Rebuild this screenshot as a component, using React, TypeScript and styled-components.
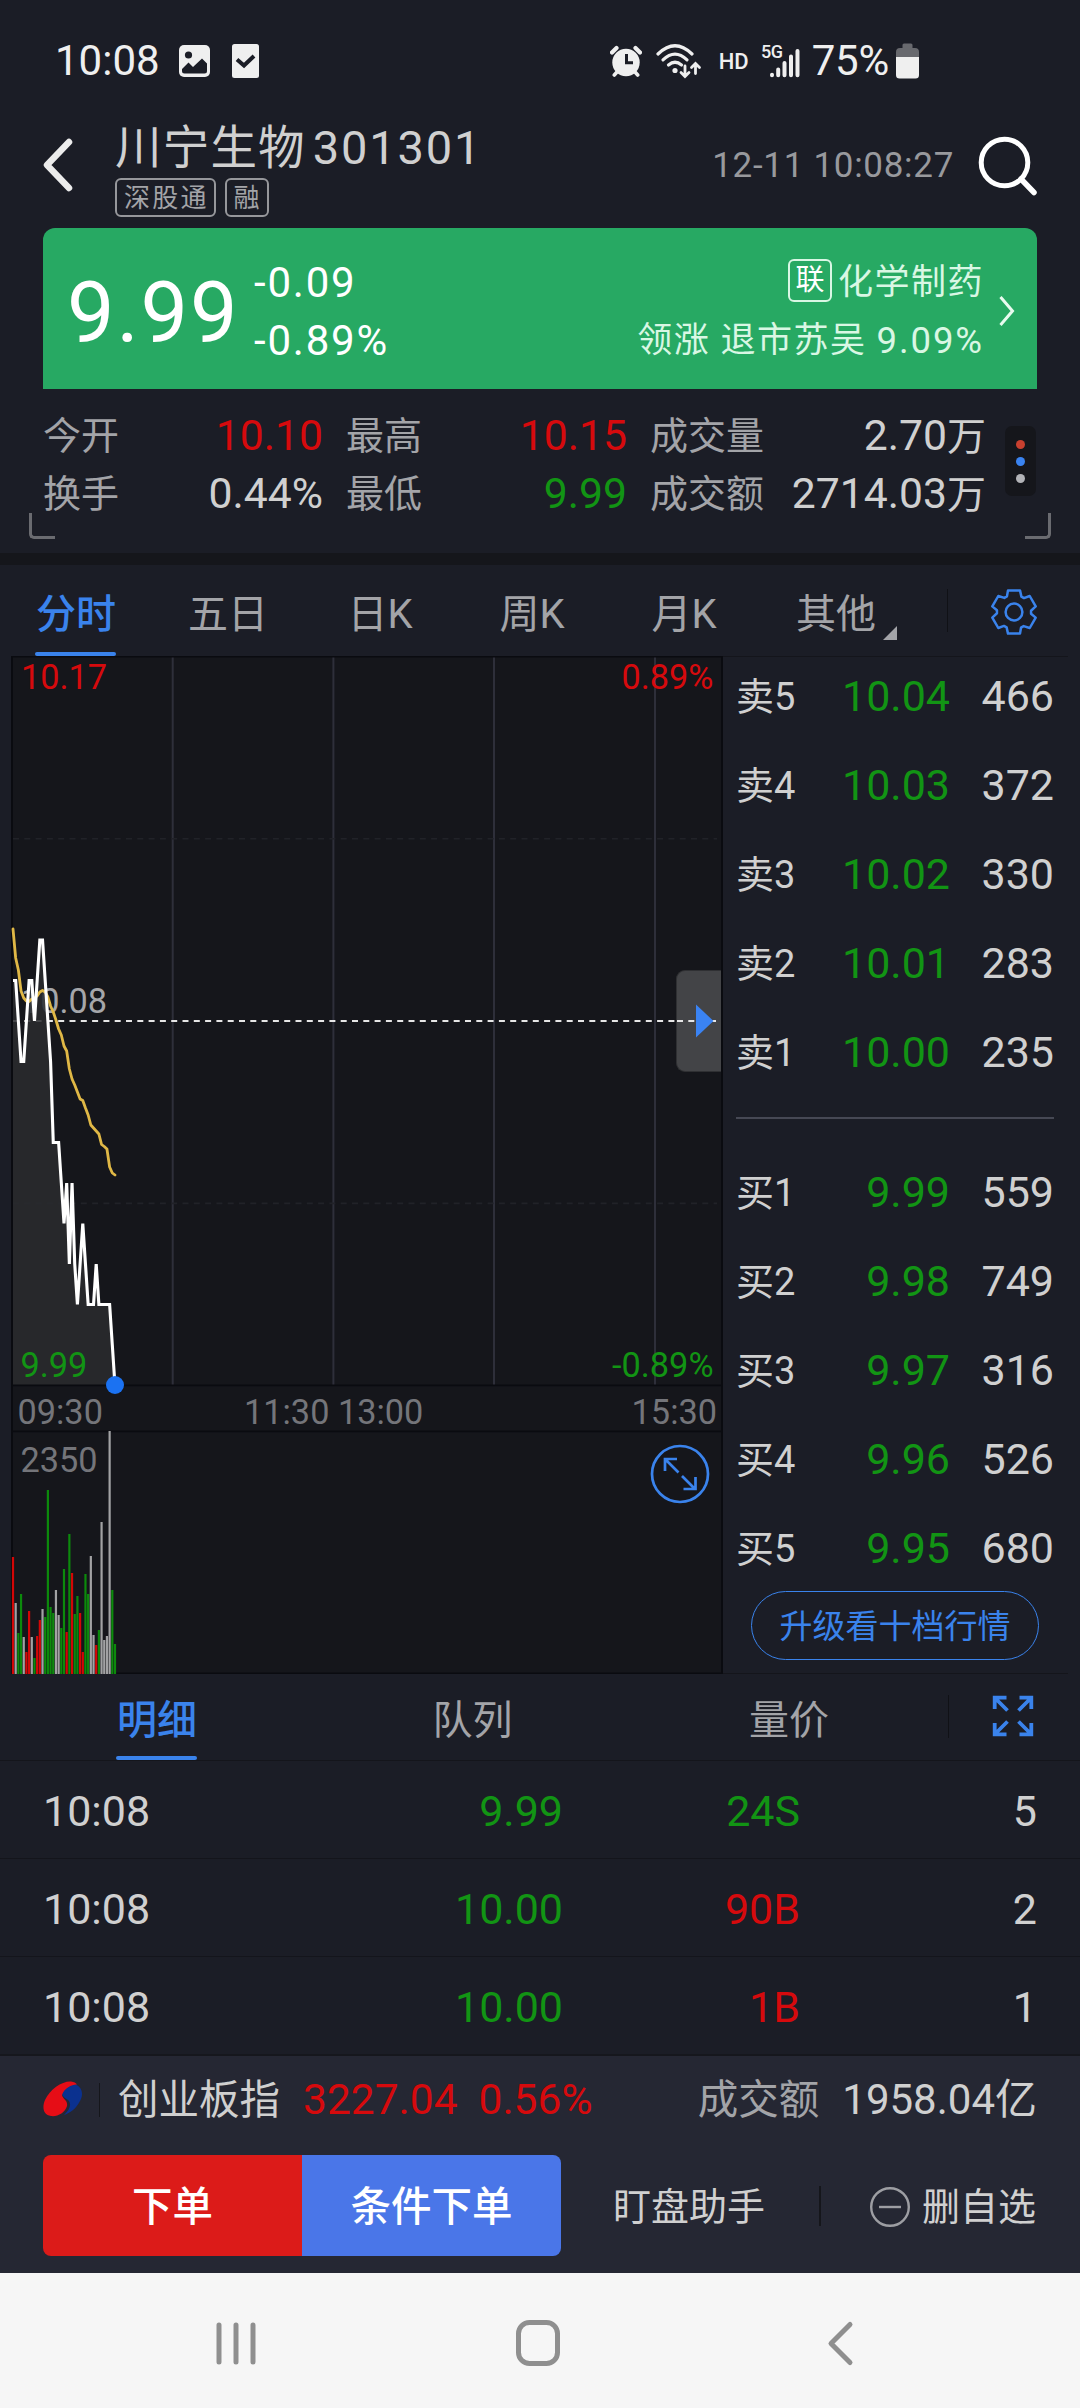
import React from "react";
import styled, { createGlobalStyle } from "styled-components";

const c = {
  bg: "#1b1d26",
  panel: "#15161b",
  line: "#0a0b10",
  hair: "#14151b",
  text: "#d0d0d0",
  muted: "#a3a4a8",
  dim: "#74757a",
  red: "#d60a0d",
  green: "#129414",
  blue: "#3a83ec",
  card: "#27a963",
};

const Global = createGlobalStyle`
  html, body { margin: 0; padding: 0; background: ${c.bg}; }
  * { box-sizing: border-box; }
`;

const Screen = styled.div`
  width: 1080px;
  height: 2408px;
  overflow: hidden;
  display: flex;
  flex-direction: column;
  background: ${c.bg};
  color: ${c.text};
  font-family: Roboto, "Noto Sans CJK SC", sans-serif;
  font-size: 42px;
  white-space: pre;
`;

/* ---------- status bar ---------- */

const StatusBar = styled.div`
  height: 122px;
  flex: none;
  display: flex;
  align-items: center;
  padding-left: 55px;
  padding-right: 161px;
  color: #efefef;
  line-height: 50px;
  svg { display: block; flex: none; }
`;
const StatusTime = styled.span`
  width: 124px;
`;
const StatusRight = styled.div`
  margin-left: auto;
  display: flex;
  align-items: center;
`;
const HdMark = styled.span`
  font-size: 22px;
  font-weight: 500;
  line-height: 30px;
  margin: 2px 12px 0 17px;
`;
const Percent = styled.span`
  margin: 0 7px 0 11px;
  letter-spacing: -0.2px;
`;

/* ---------- header ---------- */

const Header = styled.header`
  height: 106px;
  flex: none;
  display: flex;
  align-items: flex-start;
  padding: 0 42px 0 43px;
`;
const BackSlot = styled.div`
  width: 72px;
  height: 86px;
  display: flex;
  align-items: center;
`;
const TitleLine = styled.div`
  display: flex;
  height: 56px;
  line-height: 52px;
`;
const StockName = styled.span`
  font-size: 46.5px;
  letter-spacing: 1.2px;
`;
const StockCode = styled.span`
  font-size: 47px;
  letter-spacing: 1.8px;
  margin-left: 7px;
`;
const Tags = styled.div`
  display: flex;
  gap: 9px;
`;
const Tag = styled.span`
  height: 39px;
  border: 2px solid #96979b;
  border-radius: 6px;
  padding: 0 5px 0 7px;
  font-size: 26px;
  line-height: 37px;
  letter-spacing: 2.2px;
  color: ${c.muted};
`;
const HeaderRight = styled.div`
  margin-left: auto;
  height: 87px;
  display: flex;
  align-items: center;
  gap: 24px;
`;
const Clock = styled.span`
  font-size: 35px;
  letter-spacing: 0.7px;
  color: #98999d;
`;

/* ---------- quote card ---------- */

const QuoteCard = styled.section`
  height: 161px;
  flex: none;
  margin: 0 43px;
  border-radius: 12px 12px 0 0;
  background: ${c.card};
  display: flex;
  align-items: flex-start;
  color: #fff;
`;
const LastPrice = styled.div`
  font-size: 84.5px;
  line-height: 100px;
  letter-spacing: 1.9px;
  padding: 36px 0 0 24px;
  width: 211px;
`;
const Stack = styled.div<{ $right?: boolean }>`
  display: flex;
  flex-direction: column;
  padding-top: 25.5px;
  line-height: 58px;
  letter-spacing: 1.8px;
  align-items: ${(p) => (p.$right ? "flex-end" : "flex-start")};
  margin-left: ${(p) => (p.$right ? "auto" : "0")};
`;
const SectorLine = styled.div`
  display: flex;
  align-items: center;
  font-size: 35px;
  letter-spacing: 1.5px;
  color: #d9f7e4;
`;
const SectorGain = styled.span`
  font-size: 36.5px;
  letter-spacing: 1.9px;
`;
const LinkBadge = styled.span`
  width: 44px;
  height: 43px;
  border: 2px solid #d9f7e4;
  border-radius: 6px;
  margin-right: 6px;
  margin-top: -5px;
  text-align: center;
  font-size: 29px;
  line-height: 39px;
  letter-spacing: 0;
  color: #fff;
`;
const CardArrow = styled.svg`
  margin: 67px 22px 0 15px;
  flex: none;
`;

/* ---------- key figures ---------- */

const Figures = styled.section`
  height: 164px;
  flex: none;
  position: relative;
  display: flex;
  align-items: flex-start;
  padding: 17px 43px 0;
`;
const FigureCol = styled.div<{ $w: number; $gap?: number }>`
  width: ${(p) => p.$w}px;
  margin-right: ${(p) => p.$gap ?? 0}px;
`;
const FigureRow = styled.div`
  display: flex;
  justify-content: space-between;
  height: 58px;
  line-height: 58px;
`;
const Label = styled.span`
  font-size: 38px;
  line-height: 60px;
  color: ${c.muted};
`;
const Value = styled.span<{ $c?: string }>`
  font-size: 42.7px;
  color: ${(p) => p.$c ?? c.text};
`;
const Unit = styled.span`
  font-size: 39px;
`;
const DotsPill = styled.div`
  width: 31px;
  height: 70px;
  margin: 20px 0 0 19px;
  border-radius: 7px;
  background: ${c.panel};
  display: flex;
  flex-direction: column;
  align-items: center;
  justify-content: center;
  gap: 8px;
`;
const Dot = styled.i<{ $c: string }>`
  width: 9px;
  height: 9px;
  border-radius: 50%;
  background: ${(p) => p.$c};
`;
const Corner = styled.i<{ $side: "left" | "right" }>`
  position: absolute;
  bottom: 14px;
  ${(p) => p.$side}: 29px;
  width: 26px;
  height: 26px;
  border-bottom: 3px solid #6a6b70;
  border-${(p) => p.$side}: 3px solid #6a6b70;
  border-bottom-${(p) => p.$side}-radius: 5px;
`;
const Band = styled.div`
  height: 12px;
  flex: none;
  background: ${c.panel};
`;

/* ---------- tabs ---------- */

const TabBar = styled.nav<{ $h: number }>`
  height: ${(p) => p.$h}px;
  flex: none;
  display: flex;
  align-items: stretch;
`;
const TabCell = styled.div<{ $w: number; $on?: boolean }>`
  width: ${(p) => p.$w}px;
  display: flex;
  align-items: center;
  justify-content: center;
  font-size: 40px;
  position: relative;
  color: ${(p) => (p.$on ? c.blue : c.muted)};
  font-weight: ${(p) => (p.$on ? 500 : 400)};
`;
const Underline = styled.i`
  position: absolute;
  bottom: 0;
  left: 50%;
  width: 81px;
  margin-left: -41px;
  height: 4px;
  border-radius: 2px;
  background: ${c.blue};
`;
const MoreMark = styled.i`
  position: absolute;
  left: 123px;
  bottom: 16px;
  border-left: 14px solid transparent;
  border-bottom: 14px solid ${c.muted};
`;
const TabTool = styled.div<{ $top: number; $left: number }>`
  flex: 1;
  padding: ${(p) => p.$top}px 0 0 ${(p) => p.$left}px;
  display: flex;
  gap: 43px;
  align-items: flex-start;
  svg { display: block; }
`;
const TabRule = styled.i`
  width: 1px;
  height: 43px;
  background: #101116;
`;

/* ---------- chart + order book ---------- */

const Main = styled.section`
  height: 1018px;
  flex: none;
  display: flex;
`;
const ChartBox = styled.div`
  width: 723px;
  position: relative;
  svg { display: block; }
  svg text { font-family: Roboto, sans-serif; font-size: 34.3px; }
`;
const Handle = styled.div`
  position: absolute;
  left: 676px;
  top: 314px;
  width: 45px;
  height: 102px;
  border-radius: 9px 0 0 9px;
  background: #434447;
  border: 1px solid #2f3033;
  border-right: 0;
  display: flex;
  align-items: center;
  svg { display: block; margin-left: -1px; }
`;
const Book = styled.div`
  width: 345px;
  padding: 0 14px 0 13px;
  border-top: 1px solid ${c.hair};
  border-bottom: 1px solid ${c.hair};
  display: flex;
  flex-direction: column;
`;
const BookRow = styled.div`
  height: 89px;
  flex: none;
  display: grid;
  grid-template-columns: 78px 136px 1fr;
  line-height: 78px;
  font-size: 43px;
`;
const BookLabel = styled.span`
  font-size: 38px;
  line-height: 81px;
`;
const BookNum = styled.span<{ $c?: string }>`
  text-align: right;
  color: ${(p) => p.$c ?? c.text};
`;
const BookRule = styled.div`
  height: 2px;
  flex: none;
  margin: 15px 0 34px;
  background: #464854;
`;
const Upgrade = styled.div`
  width: 288px;
  height: 69px;
  flex: none;
  margin: -7px 0 0 15px;
  border: 1.5px solid ${c.blue};
  border-radius: 35px;
  color: ${c.blue};
  font-size: 33px;
  line-height: 69px;
  text-align: center;
`;

/* ---------- ticks ---------- */

const TickRow = styled.div`
  height: 98px;
  flex: none;
  border-top: 1px solid ${c.hair};
  padding: 0 43px;
  display: grid;
  grid-template-columns: 200px 320px 237px 1fr;
  font-size: 43px;
  line-height: 100px;
`;
const TickNum = styled.span<{ $c?: string }>`
  text-align: right;
  color: ${(p) => p.$c ?? c.text};
`;

/* ---------- footer ---------- */

const Footer = styled.footer`
  height: 219px;
  flex: none;
  background: #252733;
  border-top: 2px solid #16171d;
`;
const IndexRow = styled.div`
  height: 99px;
  display: flex;
  align-items: center;
  padding: 0 43px 12px;
  line-height: 60px;
  svg { display: block; }
`;
const FooterRule = styled.i<{ $h: number; $w: number; $m: string }>`
  width: ${(p) => p.$w}px;
  height: ${(p) => p.$h}px;
  margin: ${(p) => p.$m};
  background: #15161b;
`;
const IndexName = styled.span`
  font-size: 40.5px;
  width: 185px;
`;
const IndexNum = styled.span`
  font-size: 42.5px;
  color: ${c.red};
  margin-right: 21px;
`;
const Turnover = styled.span`
  margin-left: auto;
  font-size: 40.5px;
  color: ${c.muted};
  margin-right: 23px;
`;
const Actions = styled.div`
  height: 101px;
  display: flex;
  align-items: center;
  padding: 0 43px;
`;
const Action = styled.div<{ $bg: string; $r: string }>`
  width: 259px;
  height: 101px;
  background: ${(p) => p.$bg};
  border-radius: ${(p) => p.$r};
  color: #fff;
  font-size: 40.5px;
  font-weight: 500;
  line-height: 104px;
  text-align: center;
`;
const TextAction = styled.div<{ $ml?: number }>`
  height: 101px;
  margin-left: ${(p) => p.$ml ?? 0}px;
  display: flex;
  align-items: center;
  gap: 11px;
  font-size: 38px;
  line-height: 50px;
  padding-top: 2px;
`;

const NavBar = styled.div`
  flex: 1;
  background: #f6f6f6;
  display: flex;
  align-items: flex-start;
  padding: 46px 0 0 216px;
  svg { display: block; flex: none; }
`;

/* ---------- data ---------- */

const X0 = 13;
const STEP = 2.684;
const prices = [
  9, 9, 8, 7, 7, 8, 9, 9, 8, 9, 10, 10, 9, 8, 7, 5, 5, 5, 4, 3, 4, 2, 4, 2, 1, 2, 3, 2, 1, 1, 1, 2, 1, 1, 1, 1, 1, 0, -1,
];
const average = [
  273, 302, 314, 335, 342, 345, 345.5, 343, 342, 340, 336, 334.5, 336, 341, 350, 356, 364, 373, 379, 390, 395, 413, 423,
  429, 436, 443, 444.5, 452, 459, 469, 472, 475, 478, 488.5, 490.5, 493, 511, 517, 519,
];
const volumes: [string, number][] = [
  ["r", 117], ["w", 71], ["g", 41], ["g", 80], ["w", 37], ["r", 22], ["r", 63], ["w", 37], ["g", 16], ["r", 38],
  ["r", 54], ["w", 65], ["g", 57], ["g", 184], ["g", 67], ["g", 61], ["w", 84], ["w", 59], ["g", 46], ["g", 105],
  ["r", 42], ["g", 140], ["r", 101], ["g", 60], ["g", 78], ["r", 61], ["r", 22], ["g", 100], ["g", 80], ["w", 118],
  ["w", 39], ["r", 29], ["g", 44], ["w", 152], ["w", 34], ["w", 38], ["w", 243], ["g", 84], ["g", 30],
];
const volumeColor: Record<string, string> = { r: "#d40606", g: "#0c8a0c", w: "#a2a2a4" };
const priceLine = prices.map((p, i) => `${X0 + i * STEP},${365 - (p - 8) * 40.5}`).join(" ");
const averageLine = average.map((y, i) => `${X0 + i * STEP},${y}`).join(" ");

const asks = [
  ["卖5", "10.04", "466"],
  ["卖4", "10.03", "372"],
  ["卖3", "10.02", "330"],
  ["卖2", "10.01", "283"],
  ["卖1", "10.00", "235"],
];
const bids = [
  ["买1", "9.99", "559"],
  ["买2", "9.98", "749"],
  ["买3", "9.97", "316"],
  ["买4", "9.96", "526"],
  ["买5", "9.95", "680"],
];
const ticks = [
  ["10:08", "9.99", "24S", "5"],
  ["10:08", "10.00", "90B", "2"],
  ["10:08", "10.00", "1B", "1"],
];

/* ---------- drawings ---------- */

const gearPoints = Array.from({ length: 6 }, (_, k) => {
  const a = (k * Math.PI) / 3;
  return [[-6, -21.6], [6, -21.6], [7.4, -15.4], [10, -13.9]]
    .map(([x, y]) => `${(x * Math.cos(a) - y * Math.sin(a)).toFixed(2)},${(x * Math.sin(a) + y * Math.cos(a)).toFixed(2)}`)
    .join(" ");
}).join(" ");

const Gear = () => (
  <svg width="46" height="46" viewBox="-23 -23 46 46" fill="none" stroke={c.blue} strokeWidth="2.5" strokeLinejoin="round">
    <polygon points={gearPoints} />
    <circle r="8.4" />
  </svg>
);

const Glyph = styled.svg<{ $ml?: number }>`
  margin-left: ${(p) => p.$ml ?? 0}px;
`;

const StatusIcons = () => (
  <>
    <Glyph width="31" height="32" viewBox="0 0 31 32">
      <rect width="31" height="32" rx="5" fill="#efefef" />
      <circle cx="9.5" cy="10" r="3.6" fill={c.bg} />
      <path d="M3 24 L9.5 17.5 L14 22 L23 13.5 L28 18.5 V26 Q28 28.5 25.5 28.5 H5.5 Q3 28.5 3 26 Z" fill={c.bg} />
    </Glyph>
    <Glyph $ml={22} width="27" height="34" viewBox="0 0 27 34">
      <rect width="27" height="34" rx="2.5" fill="#efefef" />
      <path d="M5 15.5 L12 21.5 L22 12" fill="none" stroke={c.bg} strokeWidth="4" />
    </Glyph>
  </>
);

const Alarm = () => (
  <Glyph width="32" height="32" viewBox="0 0 32 32">
    <circle cx="16" cy="17.5" r="13.7" fill="#efefef" />
    <path d="M2 7.5 L6.5 3 M30 7.5 L25.5 3" stroke="#efefef" strokeWidth="4.2" strokeLinecap="round" />
    <path d="M7 27 L4.3 30 M25 27 L27.7 30" stroke="#efefef" strokeWidth="3.6" strokeLinecap="round" />
    <path d="M16.5 9 V17.8 H23" fill="none" stroke={c.bg} strokeWidth="3" />
  </Glyph>
);

const Wifi = () => (
  <Glyph $ml={14} width="46" height="35" viewBox="0 0 46 35" fill="none" stroke="#efefef" strokeLinecap="round">
    <path d="M2 10 Q19 -6.5 36 10" strokeWidth="3.2" />
    <path d="M7 15.8 Q19 4.5 31 15.8" strokeWidth="3.2" />
    <path d="M12.5 21 Q19 15.5 25.5 21" strokeWidth="3.2" />
    <circle cx="19" cy="26.5" r="2.6" fill="#efefef" stroke="none" />
    <path d="M29 22 V32 M25 28.5 L29 32.5 L33 28.5" strokeWidth="2.8" />
    <path d="M39.5 29.5 V20 M35.5 23.5 L39.5 19.5 L43.5 23.5" strokeWidth="2.8" />
  </Glyph>
);

const Signal = () => (
  <Glyph width="40" height="44" viewBox="0 -4 40 44">
    <text x="0" y="14.5" fontFamily="Roboto, sans-serif" fontWeight="500" fontSize="18" textLength="22" fill="#efefef">5G</text>
    <g stroke="#efefef" strokeWidth="4" strokeLinecap="round">
      <path d="M11 31.7 V32.3 M17.2 26.5 V32.3 M23.5 20 V32.3 M30 13.5 V32.3 M36.5 8 V32.3" />
    </g>
  </Glyph>
);

const Battery = () => (
  <Glyph width="23" height="36" viewBox="0 0 23 36">
    <path d="M6.5 2 Q6.5 0.5 8 0.5 H15 Q16.5 0.5 16.5 2 V5 H19 Q23 5 23 9 V15 H0 V9 Q0 5 4 5 H6.5 Z" fill="#68696e" />
    <path d="M0 14 H23 V32 Q23 35.5 19.5 35.5 H3.5 Q0 35.5 0 32 Z" fill="#efefef" />
  </Glyph>
);

const Chart = () => (
  <svg width="723" height="1018" viewBox="0 0 723 1018">
    <rect x="11.5" y="0.5" width="711.5" height="1017" fill={c.panel} />
    <g stroke="#2e2f3a" strokeWidth="2">
      <path d="M172.7 1 V729 M333.4 1 V729 M494 1 V729 M655 1 V729" />
    </g>
    <g stroke="#212228" strokeWidth="1.6" strokeDasharray="6 5.3">
      <path d="M13 182.7 H717 M13 547.4 H717" />
    </g>
    <path d="M13 365 H717" stroke="#e6e6e6" strokeWidth="1.8" strokeDasharray="6 5.3" />
    <text x="21" y="356.6" fill="#a5a6aa">10.08</text>
    <polygon points={`13,729 ${priceLine} ${X0 + 38 * STEP},729`} fill="#2a2b2f" opacity="0.86" />
    <g stroke={c.line} strokeWidth="1.6">
      <path d="M12 0.8 H722 M12 729.4 H722 M12 775.4 H722 M12 1017.2 H722" />
      <path d="M12 0 V1018 M722 0 V1018" strokeWidth="2" />
    </g>
    <polyline points={averageLine} fill="none" stroke="#e0b846" strokeWidth="2.8" strokeLinejoin="round" strokeLinecap="round" />
    <polyline points={priceLine} fill="none" stroke="#fff" strokeWidth="3.1" />
    <circle cx="115" cy="729" r="9" fill="#1b72f2" />
    <text x="21" y="33" fill={c.red}>10.17</text>
    <text x="713.5" y="33" textAnchor="end" fill={c.red}>0.89%</text>
    <text x="20.5" y="721" fill={c.green}>9.99</text>
    <text x="713.5" y="721" textAnchor="end" fill={c.green}>-0.89%</text>
    <g fill={c.dim}>
      <text x="17.5" y="768">09:30</text>
      <text x="244" y="768">11:30 13:00</text>
      <text x="717" y="768" textAnchor="end">15:30</text>
      <text x="20.5" y="816">2350</text>
    </g>
    {volumes.map(([k, h], i) => (
      <rect key={i} x={X0 - 1.1 + i * STEP} y={1018 - h} width="2.2" height={h} fill={volumeColor[k]} />
    ))}
    <g fill="none" stroke={c.blue} strokeWidth="2.7">
      <circle cx="680" cy="818" r="28" />
      <path d="M678.5 816.5 L665.5 803.5 M665 815 V803 H677 M682 820 L695 833 M695.5 821 V833 H683.5" />
    </g>
  </svg>
);

const Corners = () => (
  <svg width="42" height="42" viewBox="0 0 42 42" fill="none" stroke={c.blue} strokeWidth="3.8">
    <path d="M15.5 15.5 L3 3 M2.7 14 V2.7 H14.5" />
    <path d="M26.5 15.5 L39 3 M39.3 14 V2.7 H27.5" />
    <path d="M15.5 26.5 L3 39 M2.7 28 V39.3 H14.5" />
    <path d="M26.5 26.5 L39 39 M39.3 28 V39.3 H27.5" />
  </svg>
);

const Logo = () => (
  <svg width="40" height="37" viewBox="0 0 40 37">
    <path d="M31 3 C39 5 41 13 37 20 C33 28 27 32 21 34 C27 28 29 23 25 19 C21 16 17 14 20 9 C23 5 27 3 31 3 Z" fill="#0b318f" />
    <path d="M34 3.5 C30 3 21 7 19 14 C19.5 18 25 19 24 25 C22 32 14 36 8 35 C0 34 -1 26 2 19 C7 8 19 0 28 0.5 C31 0.8 33 2 34 3.5 Z" fill="#e60d16" />
  </svg>
);

/* ---------- page ---------- */

const BookLine = ({ row }: { row: string[] }) => (
  <BookRow>
    <BookLabel>{row[0]}</BookLabel>
    <BookNum $c={c.green}>{row[1]}</BookNum>
    <BookNum>{row[2]}</BookNum>
  </BookRow>
);

export default function App() {
  return (
    <Screen>
      <Global />
      <StatusBar>
        <StatusTime>10:08</StatusTime>
        <StatusIcons />
        <StatusRight>
          <Alarm />
          <Wifi />
          <HdMark>HD</HdMark>
          <Signal />
          <Percent>75%</Percent>
          <Battery />
        </StatusRight>
      </StatusBar>

      <Header>
        <BackSlot>
          <svg width="30" height="54" viewBox="0 0 30 54" fill="none" stroke="#ececec" strokeWidth="6.5" strokeLinecap="round" strokeLinejoin="round">
            <path d="M26 4 L4 27 L26 50" />
          </svg>
        </BackSlot>
        <div>
          <TitleLine>
            <StockName>川宁生物</StockName>
            <StockCode>301301</StockCode>
          </TitleLine>
          <Tags>
            <Tag>深股通</Tag>
            <Tag>融</Tag>
          </Tags>
        </div>
        <HeaderRight>
          <Clock>12-11 10:08:27</Clock>
          <svg width="60" height="60" viewBox="0 0 60 60" fill="none" stroke="#fff" strokeWidth="5">
            <circle cx="26.5" cy="26.5" r="23.3" />
            <path d="M43 43 L56 56.5" strokeWidth="5.5" strokeLinecap="round" />
          </svg>
        </HeaderRight>
      </Header>

      <QuoteCard>
        <LastPrice>9.99</LastPrice>
        <Stack>
          <span>-0.09</span>
          <span>-0.89%</span>
        </Stack>
        <Stack $right>
          <SectorLine>
            <LinkBadge>联</LinkBadge>化学制药
          </SectorLine>
          <SectorLine>领涨 退市苏吴 <SectorGain>9.09%</SectorGain></SectorLine>
        </Stack>
        <CardArrow width="16" height="32" viewBox="0 0 16 32" fill="none" stroke="#e8fbef" strokeWidth="3">
          <path d="M1.5 2 L13.5 16 L1.5 30" />
        </CardArrow>
      </QuoteCard>

      <Figures>
        <FigureCol $w={280} $gap={23}>
          <FigureRow><Label>今开</Label><Value $c={c.red}>10.10</Value></FigureRow>
          <FigureRow><Label>换手</Label><Value>0.44%</Value></FigureRow>
        </FigureCol>
        <FigureCol $w={281} $gap={23}>
          <FigureRow><Label>最高</Label><Value $c={c.red}>10.15</Value></FigureRow>
          <FigureRow><Label>最低</Label><Value $c={c.green}>9.99</Value></FigureRow>
        </FigureCol>
        <FigureCol $w={336}>
          <FigureRow><Label>成交量</Label><Value>2.70<Unit>万</Unit></Value></FigureRow>
          <FigureRow><Label>成交额</Label><Value>2714.03<Unit>万</Unit></Value></FigureRow>
        </FigureCol>
        <DotsPill>
          <Dot $c="#c8402f" />
          <Dot $c="#3a83f0" />
          <Dot $c="#b2b3b7" />
        </DotsPill>
        <Corner $side="left" />
        <Corner $side="right" />
      </Figures>
      <Band />

      <TabBar $h={91}>
        <TabCell $w={152} $on>分时<Underline /></TabCell>
        <TabCell $w={152}>五日</TabCell>
        <TabCell $w={152}>日K</TabCell>
        <TabCell $w={152}>周K</TabCell>
        <TabCell $w={152}>月K</TabCell>
        <TabCell $w={152}>其他<MoreMark /></TabCell>
        <TabTool $top={24} $left={35}><TabRule /><Gear /></TabTool>
      </TabBar>

      <Main>
        <ChartBox>
          <Chart />
          <Handle>
            <svg width="44" height="34" viewBox="0 0 44 34">
              <path d="M1 17 H40" stroke="#e6e6e6" strokeWidth="1.8" strokeDasharray="6 5.3" />
              <path d="M20 0.5 L37.5 17 L20 33.5 Z" fill="#3a83f3" />
            </svg>
          </Handle>
        </ChartBox>
        <Book>
          {asks.map((r) => <BookLine key={r[0]} row={r} />)}
          <BookRule />
          {bids.map((r) => <BookLine key={r[0]} row={r} />)}
          <Upgrade>升级看十档行情</Upgrade>
        </Book>
      </Main>

      <TabBar $h={86}>
        <TabCell $w={314} $on>明细<Underline /></TabCell>
        <TabCell $w={317}>队列</TabCell>
        <TabCell $w={316}>量价</TabCell>
        <TabTool $top={21} $left={1}><TabRule /><Corners /></TabTool>
      </TabBar>

      {ticks.map((t, i) => (
        <TickRow key={i}>
          <span>{t[0]}</span>
          <TickNum $c={c.green}>{t[1]}</TickNum>
          <TickNum $c={t[2].endsWith("S") ? c.green : c.red}>{t[2]}</TickNum>
          <TickNum>{t[3]}</TickNum>
        </TickRow>
      ))}

      <Footer>
        <IndexRow>
          <Logo />
          <FooterRule $w={1} $h={34} $m="0 18px 0 16px" />
          <IndexName>创业板指</IndexName>
          <IndexNum>3227.04</IndexNum>
          <IndexNum>0.56%</IndexNum>
          <Turnover>成交额</Turnover>
          <span>1958.04亿</span>
        </IndexRow>
        <Actions>
          <Action $bg="#dc1b19" $r="8px 0 0 8px">下单</Action>
          <Action $bg="#4a76e8" $r="0 8px 8px 0">条件下单</Action>
          <TextAction $ml={52}>盯盘助手</TextAction>
          <FooterRule $w={2} $h={40} $m="0 48px 0 54px" />
          <TextAction>
            <svg width="42" height="42" viewBox="0 0 42 42" fill="none" stroke="#9d9ea3" strokeWidth="2.4">
              <circle cx="21" cy="21" r="18.8" />
              <path d="M10 21 H32" />
            </svg>
            删自选
          </TextAction>
        </Actions>
      </Footer>

      <NavBar>
        <Glyph width="40" height="50" viewBox="0 0 40 50" stroke="#8f8f8f" strokeWidth="5" strokeLinecap="round">
          <path d="M3 6 V43 M20 6 V43 M37 6 V43" />
        </Glyph>
        <Glyph $ml={258} width="48" height="50" viewBox="0 0 48 50" fill="none" stroke="#8f8f8f" strokeWidth="5">
          <rect x="4.5" y="3.5" width="39" height="41" rx="11" />
        </Glyph>
        <Glyph $ml={264} width="28" height="50" viewBox="0 0 28 50" fill="none" stroke="#8f8f8f" strokeWidth="5" strokeLinecap="round" strokeLinejoin="round">
          <path d="M24 5.5 L5 24.5 L24 43.5" />
        </Glyph>
      </NavBar>
    </Screen>
  );
}
